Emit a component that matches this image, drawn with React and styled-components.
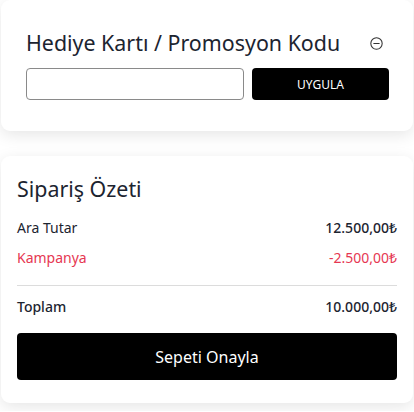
import styled, { createGlobalStyle } from 'styled-components';

const GlobalStyle = createGlobalStyle`
  body {
    margin: 0;
    background: #ffffff;
    font-family: "Noto Sans", "Open Sans", sans-serif;
    color: #212529;
  }
`;

const Page = styled.div`
  display: flex;
  flex-direction: column;
  gap: 25px;
  padding: 0 1px 8px;
  width: 412px;
`;

const Card = styled.section`
  background: #fff;
  border-radius: 9px;
  box-shadow: 0 4px 16px rgba(0, 0, 0, 0.1);
  padding: ${(p) => p.$padding};
`;

const TitleRow = styled.div`
  display: flex;
  justify-content: space-between;
  align-items: center;
  margin-bottom: 12px;
`;

const Title = styled.h2`
  margin: 0;
  font-size: 21.4px;
  font-weight: 400;
  line-height: 26px;
  color: #1c2430;
`;

const IconButton = styled.button`
  border: none;
  background: none;
  padding: 0;
  margin-right: 6px;
  display: flex;
  color: #333;
`;

const CodeRow = styled.div`
  display: grid;
  grid-template-columns: 1fr 137px;
  gap: 8px;
`;

const Input = styled.input`
  height: 32px;
  box-sizing: border-box;
  border: 1px solid #8a8a8a;
  border-radius: 4px;
`;

const DarkButton = styled.button`
  background: #000;
  color: #fff;
  border: none;
  border-radius: 4px;
  font-family: inherit;
  height: ${(p) => p.$height};
  font-size: ${(p) => p.$size};
  text-transform: ${(p) => (p.$upper ? 'uppercase' : 'none')};
`;

const Row = styled.div`
  display: flex;
  justify-content: space-between;
  align-items: center;
  height: 30px;
  font-size: 14px;
  color: ${(p) => (p.$red ? '#e63752' : '#1c2430')};
`;

const Value = styled.span`
  font-weight: ${(p) => (p.$bold ? 500 : 400)};
`;

const Label = styled.span`
  font-weight: ${(p) => (p.$bold ? 500 : 400)};
`;

const Divider = styled.hr`
  border: none;
  border-top: 1px solid #dcdcdc;
  margin: 13px 0 5px;
`;

const SummaryTitle = styled(Title)`
  margin-bottom: 10px;
`;

const Actions = styled.div`
  display: flex;
  flex-direction: column;
  margin-top: 12px;
`;

function MinusCircle() {
  return (
    <svg width="13" height="13" viewBox="0 0 16 16" fill="none" stroke="currentColor" strokeWidth="1.3">
      <circle cx="8" cy="8" r="7" />
      <line x1="4.2" y1="8" x2="11.8" y2="8" />
    </svg>
  );
}

export default function App() {
  return (
    <>
      <GlobalStyle />
      <Page>
        <Card $padding="30px 24px 31px 25px">
          <TitleRow>
            <Title>Hediye Kartı / Promosyon Kodu</Title>
            <IconButton aria-label="kapat"><MinusCircle /></IconButton>
          </TitleRow>
          <CodeRow>
            <Input type="text" />
            <DarkButton $height="32px" $size="12px" $upper>Uygula</DarkButton>
          </CodeRow>
        </Card>
        <Card $padding="20px 16px 23px 16px">
          <SummaryTitle>Sipariş Özeti</SummaryTitle>
          <Row>
            <Label>Ara Tutar</Label>
            <Value $bold>12.500,00₺</Value>
          </Row>
          <Row $red>
            <Label>Kampanya</Label>
            <Value>-2.500,00₺</Value>
          </Row>
          <Divider />
          <Row>
            <Label $bold>Toplam</Label>
            <Value $bold>10.000,00₺</Value>
          </Row>
          <Actions>
            <DarkButton $height="47px" $size="16px">Sepeti Onayla</DarkButton>
          </Actions>
        </Card>
      </Page>
    </>
  );
}
